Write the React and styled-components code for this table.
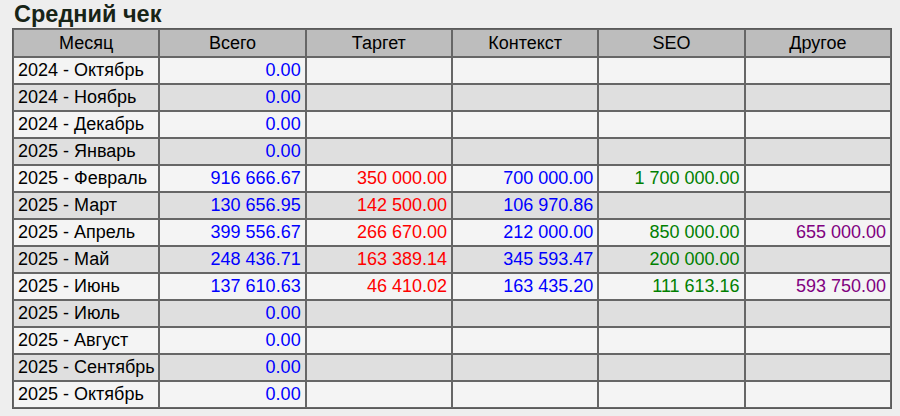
import React from 'react';
import styled, { createGlobalStyle } from 'styled-components';

const GlobalStyle = createGlobalStyle`
  body {
    margin: 0;
    background: #eeeeee;
    font-family: "Liberation Sans", Arial, sans-serif;
  }
`;

const Page = styled.div`
  padding: 0 7px 0 12px;
`;

const Title = styled.h2`
  margin: 0 0 1px 2px;
  padding-top: 2px;
  font-size: 23.5px;
  line-height: 25px;
  font-weight: bold;
  color: #172417;
`;

const Table = styled.table`
  width: 880px;
  table-layout: fixed;
  border-collapse: separate;
  border-spacing: 0;
  border: 1px solid #5a5a5a;
  font-size: 18px;
  color: #000;
`;

const Head = styled.th`
  background: #bdbdbd;
  font-weight: normal;
  text-align: center;
  padding: 4px 4px 3px;
  line-height: 19px;
  border: 1px solid #666;
`;

const Row = styled.tr`
  background: ${(p) => (p.$odd ? '#dfdfdf' : '#f4f4f4')};
`;

const Cell = styled.td`
  padding: 3px 4px;
  line-height: 19px;
  white-space: nowrap;
  border: 1px solid #666;
  text-align: ${(p) => (p.$num ? 'right' : 'left')};
  color: ${(p) => p.$color || '#000'};
`;

const colors = ['#0000ff', '#ff0000', '#0000ff', '#008000', '#800080'];

const rows = [
  ['2024 - Октябрь', '0.00', '', '', '', ''],
  ['2024 - Ноябрь', '0.00', '', '', '', ''],
  ['2024 - Декабрь', '0.00', '', '', '', ''],
  ['2025 - Январь', '0.00', '', '', '', ''],
  ['2025 - Февраль', '916 666.67', '350 000.00', '700 000.00', '1 700 000.00', ''],
  ['2025 - Март', '130 656.95', '142 500.00', '106 970.86', '', ''],
  ['2025 - Апрель', '399 556.67', '266 670.00', '212 000.00', '850 000.00', '655 000.00'],
  ['2025 - Май', '248 436.71', '163 389.14', '345 593.47', '200 000.00', ''],
  ['2025 - Июнь', '137 610.63', '46 410.02', '163 435.20', '111 613.16', '593 750.00'],
  ['2025 - Июль', '0.00', '', '', '', ''],
  ['2025 - Август', '0.00', '', '', '', ''],
  ['2025 - Сентябрь', '0.00', '', '', '', ''],
  ['2025 - Октябрь', '0.00', '', '', '', ''],
];

const headers = ['Месяц', 'Всего', 'Таргет', 'Контекст', 'SEO', 'Другое'];

export default function App() {
  return (
    <Page>
      <GlobalStyle />
      <Title>Средний чек</Title>
      <Table>
        <thead>
          <tr>
            {headers.map((h) => (
              <Head key={h}>{h}</Head>
            ))}
          </tr>
        </thead>
        <tbody>
          {rows.map((r, i) => (
            <Row key={r[0]} $odd={i % 2 === 1}>
              <Cell>{r[0]}</Cell>
              {r.slice(1).map((v, j) => (
                <Cell key={j} $num $color={colors[j]}>
                  {v}
                </Cell>
              ))}
            </Row>
          ))}
        </tbody>
      </Table>
    </Page>
  );
}
